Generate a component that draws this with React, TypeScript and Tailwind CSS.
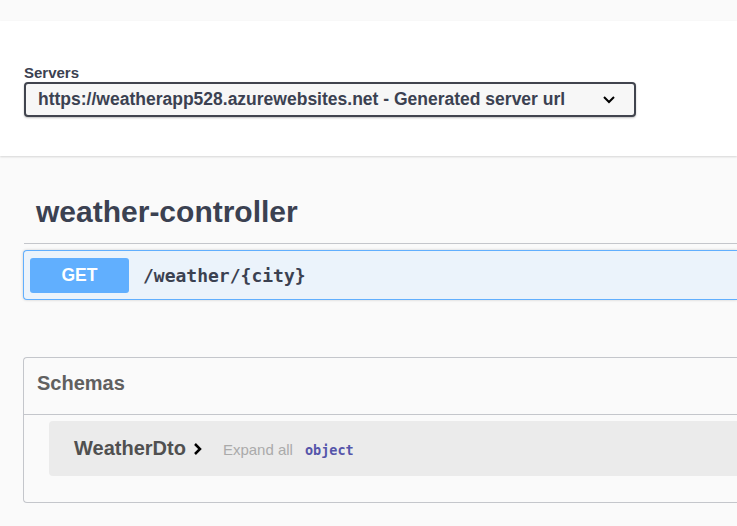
import React from "react";

export default function App() {
  const sans = { fontFamily: '"Liberation Sans", Arial, sans-serif' };
  const mono = { fontFamily: '"DejaVu Sans Mono", "Liberation Mono", monospace' };
  return (
    <div className="w-[737px] h-[526px] overflow-hidden bg-[#fafafa]" style={sans}>
      <div className="h-[21px]" />
      <div className="h-[135px] bg-white shadow-[0_1px_2px_0_rgba(0,0,0,0.15)] pt-[43px] pl-[24px]">
        <div className="text-[15px] leading-[18px] font-bold text-[#3b4151]">Servers</div>
        <div className="w-[612px] h-[35px] border-2 border-[#41444e] rounded-[4px] bg-[#f7f7f7] shadow-[0_1px_2px_0_rgba(0,0,0,0.25)] flex items-center pl-[12px] pr-[18px] justify-between">
          <span className="text-[17.5px] font-bold text-[#3b4151]">https://weatherapp528.azurewebsites.net - Generated server url</span>
          <svg width="14" height="9" viewBox="0 0 14 9" fill="none">
            <path d="M2 2l5 5 5-5" stroke="#000" strokeWidth="2" />
          </svg>
        </div>
      </div>
      <div className="pl-[24px]">
        <div className="border-b border-[#c4c6cb] h-[88px] flex items-center pl-[12px] pt-[24px]">
          <span className="text-[30px] font-bold text-[#3b4151]">weather-controller</span>
        </div>
        <div className="mt-[6px] h-[50px] border border-[#61affe] bg-[#ebf3fb] rounded-l-[4px] border-r-0 shadow-[0_0_3px_rgba(0,0,0,0.19)] flex items-center pl-[6px] -ml-[1px]">
          <div className="w-[99px] h-[35px] bg-[#61affe] rounded-[3px] flex items-center justify-center text-white font-bold text-[17.5px]">GET</div>
          <span className="ml-[14px] text-[18px] font-bold text-[#3b4151]" style={mono}>/weather/{"{city}"}</span>
        </div>
        <div className="mt-[57px] h-[146px] border border-[#c4c6cb] border-r-0 rounded-l-[4px] -ml-[1px]">
          <div className="h-[57px] border-b border-[#c4c6cb] flex items-center pl-[13px] pb-[6px]">
            <span className="text-[20px] font-bold text-[#606060]">Schemas</span>
          </div>
          <div className="mt-[6px] ml-[25px] h-[55px] bg-[#ebebeb] rounded-l-[4px] flex items-center pl-[25px] pb-[2px]">
            <span className="text-[20px] font-bold text-[#505050]">WeatherDto</span>
            <svg className="ml-[7px] mt-[3px]" width="10" height="14" viewBox="0 0 10 14" fill="none">
              <path d="M2 2l5 5-5 5" stroke="#000" strokeWidth="2.5" />
            </svg>
            <span className="ml-[20px] text-[15px] text-[#aaaaaa] mt-[5px]">Expand all</span>
            <span className="ml-[12px] text-[13.5px] font-bold text-[#5555aa] mt-[5px]" style={mono}>object</span>
          </div>
        </div>
      </div>
    </div>
  );
}
